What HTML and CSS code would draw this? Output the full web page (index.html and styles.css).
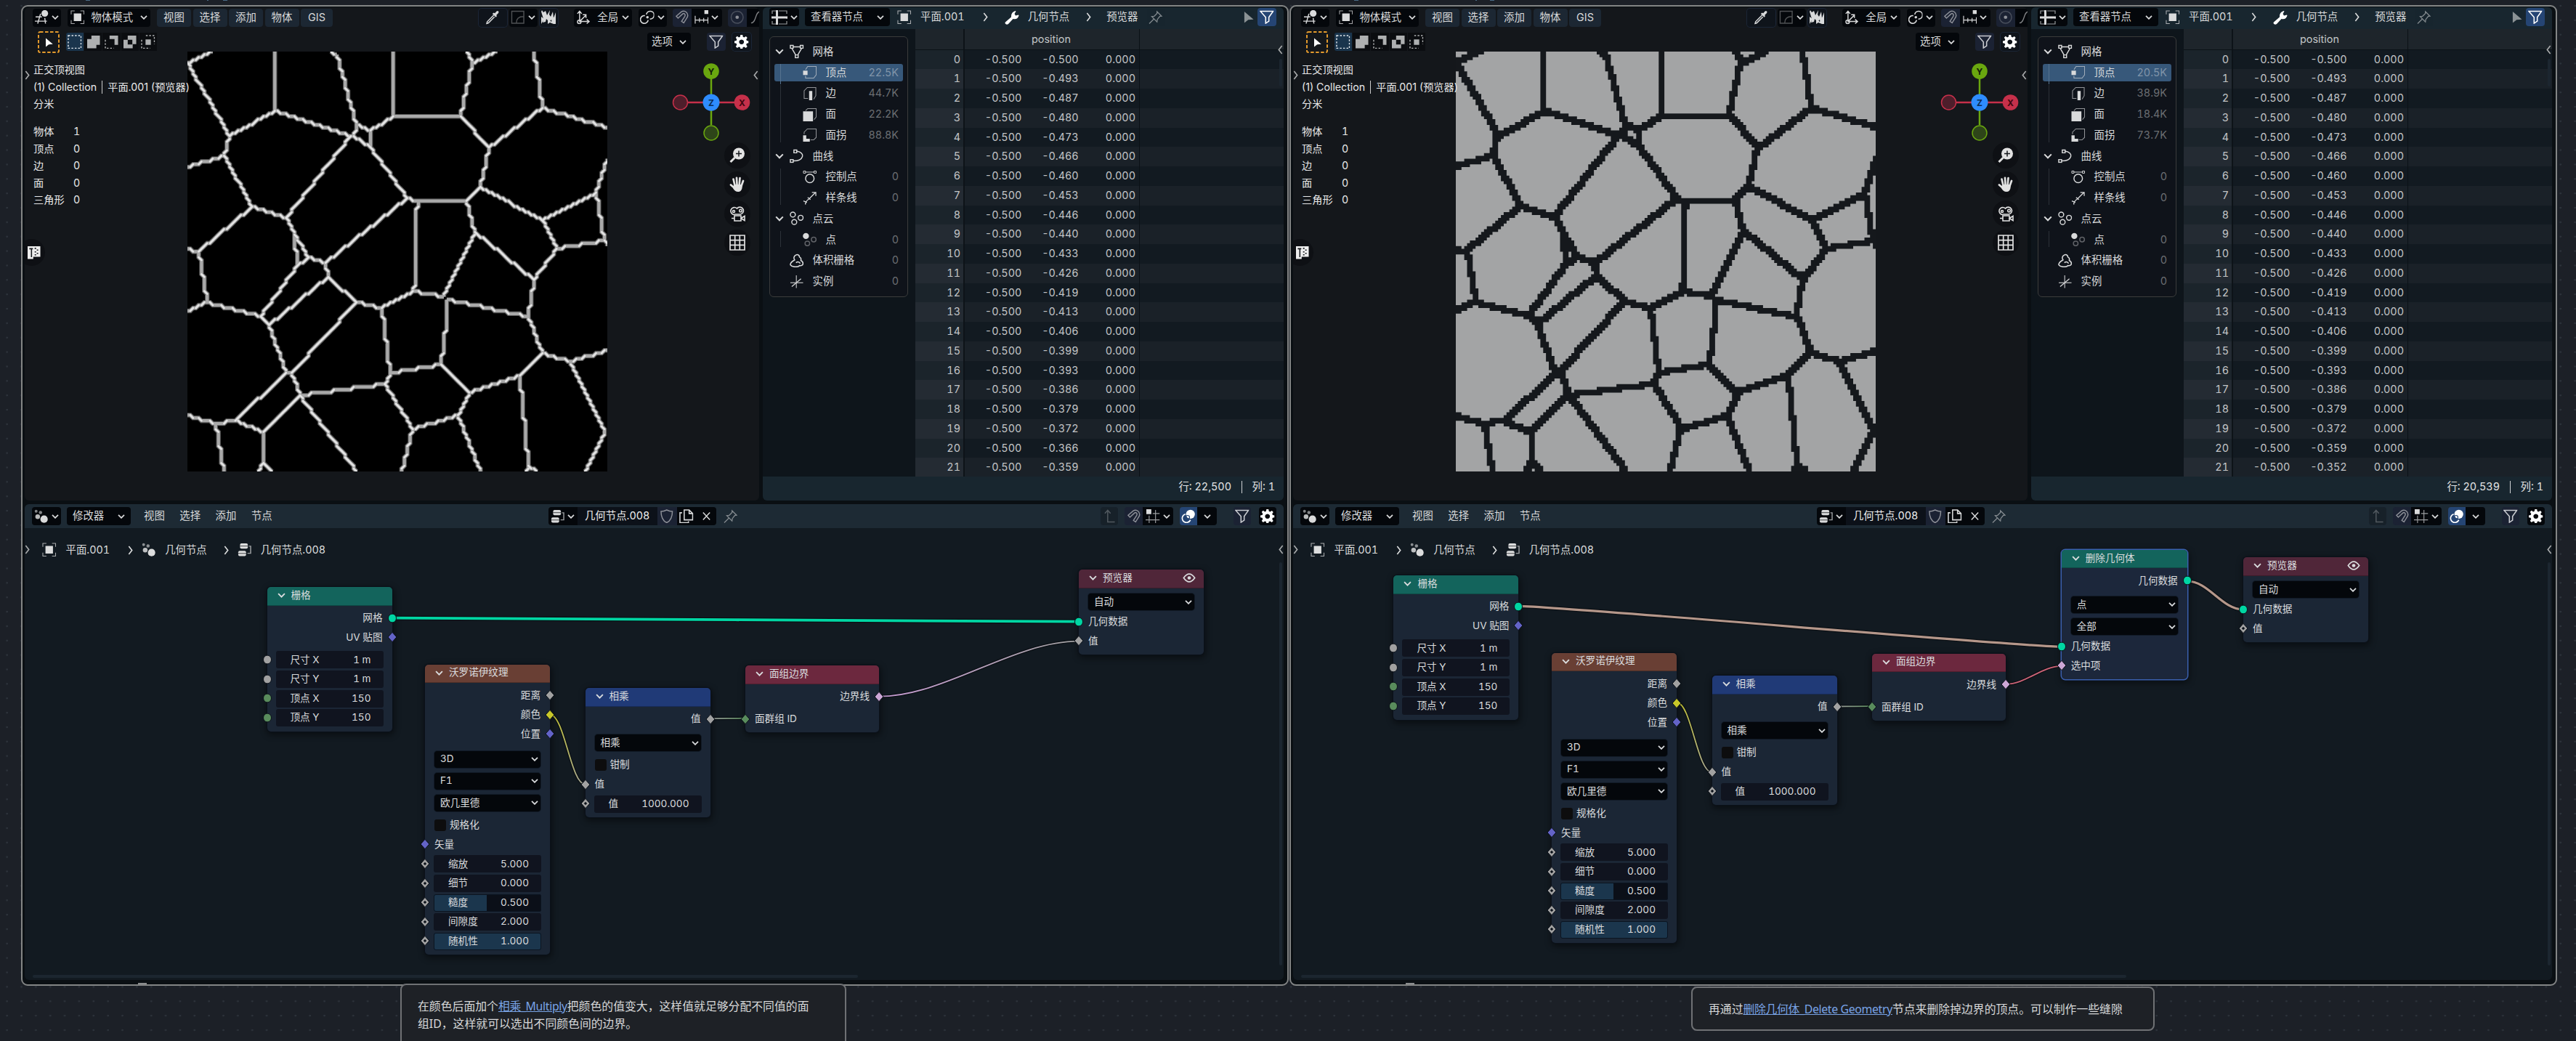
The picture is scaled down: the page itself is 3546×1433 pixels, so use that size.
FILE: index.html
```html
<!DOCTYPE html>
<html lang="zh-CN">
<head>
<meta charset="utf-8">
<title>几何节点.008</title>
<link rel="stylesheet" href="styles.css">
</head>
<body>
<svg class="defs" aria-hidden="true">
  <symbol id="down" viewBox="0 0 10 6"><path d="M1 .8 5 4.9 9 .8" stroke-width="1.7"/></symbol>
  <symbol id="right" viewBox="0 0 6 12"><path d="M1 1 5 6 1 11"/></symbol>
  <symbol id="left" viewBox="0 0 6 12"><path d="M5 1 1 6 5 11"/></symbol>
  <symbol id="view3d" viewBox="0 0 20 20"><path d="M8 5 4 19M1 9.5h9M0 15.5h17M14 11l1 8"/><circle cx="14" cy="4.5" r="4.7" class="s"/></symbol>
  <symbol id="object" viewBox="0 0 20 20"><path d="M1 6V1h5M14 1h5v5M19 14v5h-5M6 19H1v-5" stroke-width="1.1" opacity=".75"/><path class="s" d="M4.700 4.700h10.600v10.600H4.700z"/></symbol>
  <symbol id="dropper" viewBox="0 0 20 20"><path d="M12 7 2.800 16.200 2 19l2.500-1 8.500-8.500"/><path class="s" d="m10 5 2-1.500 1.500.8L16 1.500q1.500-1 2.500 0t0 2.500l-2.800 3 .6 1.500L15 10z"/></symbol>
  <symbol id="falloff" viewBox="0 0 20 20"><path d="M1.500 1.500h17v17h-17zM8 18q0-9 10-9" opacity=".35"/></symbol>
  <symbol id="noise" viewBox="0 0 22 20"><path class="s" d="M1 2 2 0l2 3 3-2 2 6 4-7-1 6 2 3 3-7 1 9 3-8v15h-5l-1-5-3 3-4-4-1 4-4 1 1-5z"/><path class="s" d="m1 9 4 3-4 7zM10 12l5 4 5-9 1 12h-3l-5-2-3 2z"/></symbol>
  <symbol id="axes" viewBox="0 0 20 20"><path d="M5 17V2M1.800 5 5 1.500 8 5M5 16h13M15 13l3.500 3-3.500 3M6 15l8-8M9.500 6.500H14V11"/><circle cx="4.500" cy="16.500" r="2.500"/></symbol>
  <symbol id="pivot" viewBox="0 0 20 20"><path d="M9 6a5.500 5.500 0 1 1 5 6.500M11.500 14A5.500 5.500 0 1 1 7 7.800" stroke-width="1.700"/><circle cx="10.500" cy="10" r="1.800" class="s"/></symbol>
  <symbol id="magnet" viewBox="0 0 20 20"><path d="M2 8.500 9 2.500c5-3.500 11 2 8.500 7.500L12.500 18l-3-2.200 4.500-7c1.500-3-1-5-3-3.500L4.500 11.200z"/></symbol>
  <symbol id="snapinc" viewBox="0 0 20 20"><path d="M1 8v11M19 10v9M1 14h18M7 11v6M13 11v6" stroke-width="1.200"/><path class="s" d="M14 0h6v5.500h-6z"/></symbol>
  <symbol id="prop" viewBox="0 0 20 20"><circle cx="10" cy="10" r="8.500" opacity=".4"/><circle cx="10" cy="10" r="2.400" class="s"/></symbol>
  <symbol id="curvef" viewBox="0 0 20 20"><path d="M4 18C12 18 9 2 17 2" stroke-width="1.300"/></symbol>
  <symbol id="pointer" viewBox="0 0 20 20"><path class="s" d="M4 2 17 13l-7.500.5L4 18z"/></symbol>
  <symbol id="m1" viewBox="0 0 20 20"><path d="M1 1h18v18H1z" stroke-dasharray="2.500 2.200"/></symbol>
  <symbol id="m2" viewBox="0 0 20 20"><path class="s" d="M7 1h12v13h-5v5H1V6h6z"/></symbol>
  <symbol id="m3" viewBox="0 0 20 20"><path class="s" d="M7 1h12v13h-5V6H7z"/><path d="M1 7v12h12" stroke-dasharray="2.500 2.200"/></symbol>
  <symbol id="m4" viewBox="0 0 20 20"><path class="s" fill-rule="evenodd" d="M7 1h12v12h-5v6H1V7h6zM7 7h6.500v6.500H7z"/></symbol>
  <symbol id="m5" viewBox="0 0 20 20"><path class="s" d="M6.500 6.500h7.500V14H6.500z"/><path d="M7 1h12v12M1 7v12h12" stroke-dasharray="2.500 2.200"/></symbol>
  <symbol id="funnel" viewBox="0 0 20 20"><path d="M1 1.500h18l-6 8.500v5.500L8.500 18.500V10z" stroke-width="1.600"/></symbol>
  <symbol id="gear" viewBox="0 0 20 20"><path class="s" fill-rule="evenodd" d="m8.500 0h3l.5 2.800 1.800.8 2.400-1.600 2 2-1.600 2.400.8 1.900 2.600.4v2.900l-2.700.5-.7 1.900 1.600 2.300-2.100 2.100-2.400-1.600-1.800.7-.5 2.700H8.500L8 17.500l-1.800-.7-2.300 1.600-2.100-2.100L3.400 14l-.8-1.900L0 11.500V8.600l2.700-.5.7-1.800-1.600-2.400L3.900 1.900l2.300 1.600L8 2.800zM10 6.600a3.400 3.400 0 1 0 .01 0z"/></symbol>
  <symbol id="zoom" viewBox="0 0 22 22"><circle cx="13" cy="8.500" r="8" class="s"/><path d="m7.500 14-6 6" stroke-width="3"/><path d="M13 4.500v8M9 8.500h8" stroke="#14171b"/></symbol>
  <symbol id="hand" viewBox="0 0 22 22"><path d="m7.500 12-2-8.500M10.500 11 10 1.800M13.700 11 14.500 2M16.500 13l2.500-7M6 15 2 11.500" stroke-width="2.700" stroke-linecap="round"/><path class="s" d="M6 11h12l-.5 5q-1 5-5.500 5T5 16z"/></symbol>
  <symbol id="camera" viewBox="0 0 22 22"><path d="M7 12.500a5 5 0 1 1 3.500-8.500 5 5 0 1 1 5 8H7M7 14h9v7H7zM16 17.500l5-3v6zM3 17.500h4" stroke-width="1.600"/><circle cx="6" cy="8" r="1.500"/><circle cx="15.500" cy="7" r="1.800"/></symbol>
  <symbol id="ortho" viewBox="0 0 22 22"><path d="M1 1h20v20H1zM7.700 1v20M14.300 1v20M1 7.700h20M1 14.300h20" stroke-width="1.700"/></symbol>
  <symbol id="tpanel" viewBox="0 0 20 20"><path class="s" d="M1 1h18v15H9v3H1z"/><path d="M3.500 4.500h5M6.500 4.500v12M11 4h2M14 6.500h2M11 9h2M14 11h2M11 13h2" stroke="#14171b" stroke-width="1.600"/></symbol>
  <symbol id="sheet" viewBox="0 0 22 20"><path d="M1 5V1h5M10 1h11v4M21 9v3M21 15v4H10M6 19H1v-4" stroke-width="1.200" opacity=".7"/><path d="M7.500 0v20M0 10h22" stroke-width="3"/></symbol>
  <symbol id="wrench" viewBox="0 0 20 20"><path class="s" d="M1.500 16 9 9.500Q8.500 3 14.500 1l1 .4-2 3.600 1.500 2.500 4-1 .5.800Q18 13.500 11.500 12L5 19Q3 20.500 1.300 19t.2-3z"/></symbol>
  <symbol id="pin" viewBox="0 0 20 20"><path d="m12 2 6.500 6.500-2.500.2-3.500 4.300-.5 3.500-7.500-7.500L8 8.500l4-4zM7.500 12.500 1 19" stroke-width="1.300"/></symbol>
  <symbol id="mesh" viewBox="0 0 20 20"><path d="M1 1.500h4v4H1zM15 1.500h4v4h-4zM8 15h4v4H8zM5 3.500h10M3 5.500 8.500 15M17 5.500 11.500 15"/></symbol>
  <symbol id="vert" viewBox="0 0 20 20"><path d="M4 6 7 1.500h12v12l-3.500 4.500H4v-3.500" stroke-width="1.100" opacity=".65"/><path class="s" d="M.5 7.500h6.300v6H.5z"/></symbol>
  <symbol id="edge" viewBox="0 0 20 20"><path d="M7.500 17H2V6l4.500-4.500H18.500V13l-3 5" stroke-width="1.100" opacity=".65"/><path class="s" d="M9 6.500h4.500v13H9z"/></symbol>
  <symbol id="face" viewBox="0 0 20 20"><path d="M4 4.500 7 1.500h12v12l-3 3.500" stroke-width="1.100" opacity=".65"/><path class="s" d="M.5 5.500h14v14H.5z"/></symbol>
  <symbol id="corner" viewBox="0 0 20 20"><path d="M2 9V6l4.500-4.500H19v12L15.500 17H11" stroke-width="1.100" opacity=".65"/><path class="s" d="M.5 10.500h4.500v5H10v4H.5z"/></symbol>
  <symbol id="curve" viewBox="0 0 20 20"><path d="M6 1.500h4v4H6zM1 15h4v4H1zM10 3c13 2 10 14-5 14"/></symbol>
  <symbol id="ctrl" viewBox="0 0 20 20"><circle cx="10" cy="12" r="6"/><path d="M4 3h12" stroke-width="1"/><path d="M1 1.500h3v3H1zM16 1.500h3v3h-3z" stroke-width="1"/></symbol>
  <symbol id="spline" viewBox="0 0 20 20"><path d="M4 19Q3 15 9 11L18 2M13 2h5.500v5M1 14l5 2M7 9l4 3" stroke-width="1.300"/></symbol>
  <symbol id="cloud" viewBox="0 0 20 20"><circle cx="4.500" cy="4.500" r="3.500"/><circle cx="15.500" cy="9" r="3.500"/><circle cx="6.500" cy="15" r="3.500"/></symbol>
  <symbol id="point" viewBox="0 0 20 20"><circle cx="4.500" cy="5" r="4.300" class="s"/><circle cx="15.500" cy="10" r="3.300" opacity=".4"/><circle cx="6.500" cy="15.500" r="3.300" opacity=".4"/></symbol>
  <symbol id="volume" viewBox="0 0 20 20"><path d="M7 9C3 3 13-2 14 5c4 2 1 4 2 5 4 2 4 8-2 7-3 3-11 2-13-1 0-4 3-5 6-7zM9 13q3-3 6 1" stroke-width="1.600"/></symbol>
  <symbol id="inst" viewBox="0 0 20 20"><path d="M9.500 1v18M1 11.500h18" opacity=".7"/><path d="m3 17 13-11" stroke-width="1.300"/></symbol>
  <symbol id="gnodes" viewBox="0 0 20 20"><circle cx="2.800" cy="2.800" r="2" class="s" opacity=".6"/><circle cx="9" cy="4.500" r="2.300" class="s" opacity=".6"/><circle cx="5" cy="10.500" r="3.300" class="s" opacity=".85"/><circle cx="14" cy="14" r="5.200" class="s"/></symbol>
  <symbol id="tree" viewBox="0 0 20 20"><rect x="3.500" y="1" width="11" height="7.500" rx="2" class="s"/><rect x="1" y="11.500" width="11" height="7.500" rx="2" class="s"/><path d="M3.500 4.800h11M1 15.200h11" stroke="#14171b" stroke-width=".8"/><path d="M16 5h2.500v10H14" opacity=".7"/></symbol>
  <symbol id="shield" viewBox="0 0 20 20"><path d="M10 1q4 2 8 2c0 8-2 13-8 16C4 16 2 11 2 3q4 0 8-2z"/></symbol>
  <symbol id="copy" viewBox="0 0 20 20"><path d="M7 1h7l5 5v9H7zM14 1v5h5M4 5H1v14h12v-2" stroke-width="1.600"/></symbol>
  <symbol id="cross" viewBox="0 0 20 20"><path d="m4.500 4 11 12M15.500 4l-11 12" stroke-width="1.700"/></symbol>
  <symbol id="parent" viewBox="0 0 20 20"><path d="M18 18H8V2M4 6l4-4.500L12 6"/></symbol>
  <symbol id="nsnap" viewBox="0 0 20 20"><path d="M5 9v11M14 1v19M0 15h20M10 6h10" stroke-width="1.200" opacity=".7"/><path class="s" d="M1 0h7v7H1z"/></symbol>
  <symbol id="overlay" viewBox="0 0 20 20"><circle cx="13" cy="7" r="6.300" class="s"/><path d="M5.800 7A6 6 0 1 0 13 15" stroke-width="1.700"/><circle cx="9" cy="11.500" r="2.800" stroke="#254574" stroke-width="1.200"/></symbol>
  <symbol id="eye" viewBox="0 0 20 14"><path d="M1.500 7q8.500-12 17 0-8.500 12-17 0z" stroke-width="1.900"/><circle cx="10" cy="7" r="2.600" class="s"/></symbol>
</svg>

<main class="desk">
  <section class="window" data-window="left"></section>
  <section class="window" data-window="right"></section>
</main>

<div class="scraps"><i></i><i></i><i></i><i></i><i></i><i></i><b></b><b></b></div>
<article class="note note-a">在颜色后面加个<a>相乘_Multiply</a>把颜色的值变大，这样值就足够分配不同值的面<br>组ID，这样就可以选出不同颜色间的边界。</article>
<article class="note note-b">再通过<a>删除几何体_Delete Geometry</a>节点来删除掉边界的顶点。可以制作一些缝隙</article>
<script src="app.js"></script>
</body>
</html>
```
FILE: styles.css
```css
* { box-sizing: border-box; }
body {
  margin: 0; width: 3546px; height: 1433px; overflow: hidden; position: relative;
  background: #1c2027 radial-gradient(circle at 9.6px 8px, #2d333b 0, #2d333b 1px, transparent 1.600px) 0 0 / 19.860px 19.860px;
  font: 14.400px/1 Inter, "Noto Sans CJK SC", sans-serif; color: #d9dadb;
  font-feature-settings: "tnum"; white-space: nowrap;
}
.defs { position: absolute; width: 0; height: 0; }
svg { display: block; flex: none; fill: none; stroke: currentColor; stroke-width: 1.500; }
.s { fill: currentColor; stroke: none; }
.ic { width: 19.500px; height: 19.500px; }
.dn { width: 10px; height: 6px; }
.cv { width: 7px; height: 13px; }

.desk { display: flex; gap: 1px; padding: 7px 0 0 29px; }
.window {
  width: 1745px; height: 1350px; flex: none; border: 2px solid #838585; border-radius: 9px;
  background: #0a0f13; padding: 1px 5px 6px 3px; display: flex; flex-direction: column; gap: 5px;
}
.top { display: flex; gap: 5px; height: 679px; }

.bar { display: flex; align-items: center; }
.btn {
  display: flex; align-items: center; justify-content: center; gap: 4px; height: 25px;
  border-radius: 4px; background: #04070b; flex: none; overflow: hidden;
}
.btn.menu { background: #1c2733; }
.btn.dim { background: #17212a; }
.btn.navy { background: #1b2233; color: #8d9098; }
.btn.rim { background: #0f141b; box-shadow: 0 0 0 1px #1b2536; }
.btn.blue { background: #254574; color: #fff; }
.btn.spread { justify-content: space-between; padding: 0 8px; }
.flat-r { border-top-right-radius: 0; border-bottom-right-radius: 0; }
.flat-l { border-top-left-radius: 0; border-bottom-left-radius: 0; }
.flat { border-radius: 0; }

.viewport { width: 1011px; position: relative; background: #14171b; border-radius: 6px; overflow: hidden; }
.viewport .bar.one { padding: 1px 0 0 11px; height: 27px; }
.viewport .bar.two { padding: 0 10px 0 18px; height: 40px; margin-top: 5px; align-items: flex-start; padding-top: 3px; }
.cursor-tool { width: 30px; height: 30px; display: grid; place-items: center; margin-top: -2px; }
.cursor-tool .ring { grid-area: 1/1; width: 30px; height: 30px; color: #e39a2c; }
.cursor-tool .ic { grid-area: 1/1; width: 15px; height: 17px; color: #fff; }
.modes { display: flex; margin-left: 9px; height: 25px; gap: 1px; }
.modes span { width: 24.200px; background: #0b0d10; display: grid; place-items: center; color: #aeb0b1; }
.modes span:first-child { background: #1a354d; color: #e4e9ee; border-radius: 3px 0 0 3px; }
.plane { position: absolute; left: 224px; top: 61px; width: 578px; height: 578px; }
.info { position: absolute; left: 12px; top: 74px; line-height: 23.700px; font-size: 14.200px; color: #e9e9e9; font-feature-settings: normal; }
.info .sep { display: inline-block; width: 1px; height: 18px; background: #ccc; vertical-align: -4px; margin: 0 7px; }
.stats { position: absolute; left: 12px; top: 159px; display: grid; grid-template-columns: 55px auto; line-height: 23.500px; font-size: 14.200px; color: #e9e9e9; }
.edge-tab { position: absolute; color: #a9abac; }
.tpanel { position: absolute; left: -9px; top: 319px; width: 37px; height: 37px; border-radius: 50%; background: #0e1014; display: grid; place-items: center; padding-left: 7px; }
.tpanel .ic { color: #eee; }
.gizmo { position: absolute; left: 889px; top: 74px; width: 112px; height: 112px; font: bold 12px Inter, sans-serif; }
.tools { position: absolute; left: 963px; top: 186px; display: grid; gap: 4px; color: #e2e2e2; }
.tools span { width: 36px; height: 36px; border-radius: 50%; background: #0e1014; display: grid; place-items: center; }
.tools svg { width: 22px; height: 22px; }

.sheet { width: 717px; background: #0e151b; border-radius: 6px; overflow: hidden; position: relative; display: flex; flex-direction: column; }
.sheet .bar { height: 30px; background: #18262f; padding: 0 10px 3px 9px; }
.sheet-body { display: flex; height: 616px; overflow: hidden; }
.tree {
  margin: 10px 10px 0 9px; width: 191px; height: 359px; border: 1.500px solid #3b3c3b; border-radius: 6px;
  background: #0f131a; padding: 8px 6px; flex: none;
}
.tree div { display: flex; align-items: center; height: 24px; margin-bottom: 4.750px; padding-right: 6px; border-radius: 3px; }
.tree .dn { width: 12px; height: 8px; margin-right: 8px; margin-left: 1px; }
.tree .ic { margin-right: 12px; }
.tree .pad .ic { margin-left: 21px; }
.tree .kid { position: relative; }
.tree .kid::before { content: ""; position: absolute; left: 8px; top: 0; height: 28.700px; width: 1px; background: #2c3138; }
.tree .last::before { height: 22px; }
.tree .kid .ic { margin-left: 39px; }
.tree .on { background: #37587a; }
.tree .on::before { background: #56738f; }
.tree b { margin-left: auto; font-weight: 400; color: #6b6e72; }
.tree .on b { color: #8094a9; }
.table { flex: 1; color: #c3c5c7; }
.table div { display: flex; height: 26.750px; align-items: center; background: #121a21; }
.table div > * { height: 100%; display: flex; align-items: center; justify-content: flex-end; }
.table i { width: 68px; font-style: normal; background: #1b242b; border-right: 2px solid #0d1318; padding-right: 4px; }
.table .trip { width: 241px; border-right: 1.500px solid #0b1116; padding-right: 5px; }
.table .trip span { width: 78.500px; text-align: right; }
.table div:nth-child(odd) { background: #1a2128; }
.table div:nth-child(odd) i { background: #242b33; }
.table .head { height: 28.500px; background: #1e252b !important; border-bottom: 1.500px solid #0b1116; }
.table .head i { background: #1e252b !important; }
.table .head .trip { justify-content: center; padding-right: 2px; }
.sheet footer { height: 33px; background: #18262f; display: flex; justify-content: flex-end; align-items: center; padding: 0 12px 4px 0; color: #e2e3e4; }
.sheet footer u { width: 1.500px; height: 17px; background: #cfd2d4; margin: 0 13.500px; }
.vscroll { position: absolute; border-radius: 3px; background: #1c2630; }

.nodes { height: 655px; background: #121a21; border-radius: 6px; position: relative; overflow: hidden; }
.nodes .bar { height: 33px; background: #1d2a34; padding: 0 10px; }
.nodes .crumbs { height: 60px; display: flex; align-items: center; padding-left: 24px; color: #dcdddd; }
.wires { position: absolute; inset: 0; width: 1733px; height: 655px; }
.node {
  position: absolute; border-radius: 5px; background: #1b2635; color: #dadcde; font-size: 13.600px;
  box-shadow: 0 0 0 1.200px #0b1119, 1px 3px 9px 2px rgba(0,0,0,.45);
}
.node > header { height: 25.500px; border-radius: 5px 5px 0 0; display: flex; align-items: center; padding: 0 14px 1px; border-bottom: 1.500px solid rgba(0,0,0,.25); }
.node > header .dn { width: 11px; height: 7px; margin-right: 8px; }
.node > header .eye { width: 18px; height: 13px; margin-left: auto; margin-right: -3px; }
.node .body { padding: 4px 13px 5px; }
.row { height: 26.600px; display: flex; align-items: center; position: relative; }
.row.out { justify-content: flex-end; }
.row.gap { margin-top: 4.500px; }
.row.sel.wide { margin-top: 6.200px; }
.row.tight { margin-top: -1.100px; }
.row.sel { height: 30.200px; }
.row.sel > span { width: 100%; height: 23px; border-radius: 4px; background: #04070b; display: flex; align-items: center; justify-content: space-between; padding: 0 3px 0 8px; box-shadow: 0 0 0 1px #111a26; }
.row.chk { height: 30px; }
.row.chk > span { width: 16px; height: 16px; border-radius: 3px; background: #0d0d0e; margin-right: 5px; }
.row.fld > span { height: 24px; margin: 0 -1px; border-radius: 3px; background: #10141f; display: flex; align-items: center; justify-content: space-between; padding: 0 17px 0 20px; flex: 1; }
.row.fld em { font-style: normal; }
.row.fld .slide { background: linear-gradient(90deg, #1b364d var(--v), #0b0f18 var(--v)); box-shadow: inset 0 0 0 1px #0b1420; }
.sock { position: absolute; width: 12px; height: 14px; stroke: #0b1119; stroke-width: 1; top: 6px; }
.in .sock, .fld .sock { left: -19px; }
.out .sock { right: -19px; }
.node.active { box-shadow: 0 0 0 1.500px #3a5fae, 1px 3px 9px 2px rgba(0,0,0,.45); background: #1c273b; }

.note { position: absolute; border: 2.500px solid #6f7174; border-radius: 8px; background: #1e2126; color: #d8d9da; font: 15.850px/24px "Noto Sans", "Noto Sans CJK SC", sans-serif; font-feature-settings: normal; padding: 17px 22px; }
.note a { color: #79a4e6; text-decoration: underline; letter-spacing: -.35px; }
.note-a { left: 551px; top: 1354px; width: 614px; height: 110px; }
.note-b { left: 2328px; top: 1358px; width: 638px; height: 61px; }
.scraps i { position: absolute; top: 0; height: 1px; width: 6px; background: #4a6a85; }
.scraps b { position: absolute; top: 1353px; height: 2px; width: 12px; background: #8b8d8e; left: 190px; }
.scraps b:last-child { left: 1935px; }
.scraps i:nth-child(1) { left: 118px; } .scraps i:nth-child(2) { left: 285px; width: 2px; } .scraps i:nth-child(3) { left: 307px; }
.scraps i:nth-child(4) { left: 1864px; } .scraps i:nth-child(5) { left: 2031px; width: 2px; } .scraps i:nth-child(6) { left: 2051px; }
```
FILE: app.js
```js
const ic = (id, cls = 'ic', style = '') => `<svg class="${cls}"${style ? ` style="${style}"` : ''}><use href="#${id}"/></svg>`;
const dn = ic('down', 'dn');
const btn = (w, ml, cls, inner) => `<div class="btn ${cls}" style="width:${w}px;margin-left:${ml}px">${inner}</div>`;

// Cell borders of the Voronoi pattern, in the units of a 1486 x 1510 sheet.
const borders = `140,30 50,75 200,330|355,30 355,240|200,330 358,240 620,333|555,30 575,38 645,295|645,295 695,310|645,295 635,330 620,333
695,310 695,372|635,330 695,372 825,552|775,30 775,262 695,310|775,262 1013,262|1035,30 1052,72 1140,30|1052,72 1013,262
1013,262 1113,378 1300,230 1532,302|1272,30 1300,230|1113,378 1088,517 1033,567 868,567 825,552|620,333 400,630
200,330 175,403 46,447|175,403 280,585 400,630|280,585 87,750 46,738|87,750 118,932 46,965|118,932 303,983 333,1012
400,630 428,685 475,768 530,795|428,685 438,800|475,768 438,800 303,983|530,795 825,552|530,795 545,838 333,1012
545,838 643,928 415,1190|333,1012 400,1190 415,1190 445,1265|643,928 733,950 845,888 953,912|868,570 855,620 853,860 845,888
1033,567 1060,675 953,912|1088,517 1302,637 1490,540 1530,420|1490,540 1522,710 1530,725|1302,637 1355,737 1525,712
1060,675 1270,850 1355,737|1270,850 1250,983 960,925|1250,983 1305,1115 1407,1148 1530,1100|1407,1148 1526,1400 1450,1538
1305,1115 1225,1197 1047,1256 940,1157|1225,1197 1255,1520 1240,1538|1255,1520 1285,1538|960,920 960,1000 940,1157 760,1187 743,1223
733,950 760,1187|743,1223 445,1268|743,1223 847,1387 1000,1338 1047,1256|847,1387 805,1538|1000,1338 1087,1538
445,1268 645,1538|445,1268 317,1400 212,1358 400,1190|212,1358 147,1365 46,1338|147,1365 178,1538|317,1400 315,1512 295,1538|315,1512 350,1538`;

function lattice() {
  const N = 149, lines = [];
  for (const poly of borders.split(/[|\n]/)) {
    const p = poly.trim().split(' ').map(s => { const [x, y] = s.split(',').map(Number); return [Math.round((x - 46) / 1486 * N), Math.round((y - 30) / 1510 * N)]; });
    for (let k = 1; k < p.length; k++) {
      const [x0, y0] = p[k - 1], [x1, y1] = p[k], n = Math.max(Math.abs(x1 - x0), Math.abs(y1 - y0)) || 1, pts = [];
      for (let i = 0; i <= n; i++) pts.push([Math.round(x0 + (x1 - x0) * i / n), Math.round(y0 + (y1 - y0) * i / n)]);
      lines.push(pts);
    }
  }
  return lines;
}

function plane(kind) {
  const c = 578 / 149, lines = lattice(), q = v => (v * c).toFixed(1);
  if (kind === 'left') {
    let all = '', diag = '';
    for (const l of lines) {
      all += 'M' + l.map(p => q(p[0]) + ' ' + q(p[1])).join('L');
      for (let i = 1; i < l.length; i++) if (l[i][0] !== l[i - 1][0] && l[i][1] !== l[i - 1][1]) diag += `M${q(l[i - 1][0])} ${q(l[i - 1][1])}L${q(l[i][0])} ${q(l[i][1])}`;
    }
    return `<svg class="plane" viewBox="0 0 578 578"><path fill="#000" stroke="none" d="M0 0h578v578H0z"/><path d="${all}" stroke="#505050" stroke-width="6.500"/><path d="${all}" stroke="#a9a9a9" stroke-width="4.300"/><path d="${diag}" stroke="#e4e4e4" stroke-width="2.600" stroke-linecap="round"/></svg>`;
  }
  // Every lattice vertex on a border takes its four faces with it; a diagonal
  // step walks round a face, so the vertex at the turn goes too.
  const gone = new Set();
  for (const l of lines) l.forEach(([x, y], i) => {
    gone.add(x + ',' + y);
    if (i && l[i - 1][0] !== x && l[i - 1][1] !== y) gone.add(x + ',' + l[i - 1][1]);
  });
  let d = '';
  for (const key of gone) {
    const [x, y] = key.split(',');
    d += `M${q(x - 1)} ${q(y - 1)}h7.800v7.800h-7.800z`;
  }
  return `<svg class="plane" viewBox="0 0 578 578"><path fill="#a3a4a5" stroke="none" d="M0 0h578v578H0z"/><path fill="#15181c" stroke="none" d="${d}"/></svg>`;
}

const gizmo = `<svg class="gizmo" viewBox="0 0 112 112"><path d="M56 24v32M56 56v32" stroke="#6aa70f" stroke-width="2.500"/><path d="M24 57h64" stroke="#c6304a" stroke-width="2.500"/>
<circle cx="56" cy="14" r="10.800" fill="#6aa70f" stroke="none"/><circle cx="56" cy="99" r="10" fill="#2e4519" stroke="#6aa70f"/><circle cx="13.500" cy="57" r="10" fill="#4e1e2b" stroke="#c6304a"/>
<circle cx="98.500" cy="57" r="10.800" fill="#c6304a" stroke="none"/><circle cx="56" cy="57" r="11.500" fill="#2e8cff" stroke="none"/>
<g fill="#132008" stroke="none" text-anchor="middle"><text x="56" y="18.500">Y</text><text x="98.500" y="61.500" fill="#42060f">X</text><text x="56" y="61.500" fill="#0b2c55">Z</text></g></svg>`;

const viewport = kind => `<div class="viewport">
<div class="bar one">${btn(39, 0, '', ic('view3d') + dn)}${btn(114, 9, '', ic('object') + '<span style="margin:0 6px 0 5px">物体模式</span>' + dn)}
${btn(47, 9, 'menu', '视图')}${btn(47, 2.5, 'menu', '选择')}${btn(47, 2.5, 'menu', '添加')}${btn(47, 2.5, 'menu', '物体')}${btn(44, 2.5, 'menu', 'GIS')}
${btn(39, 200.5, 'rim', ic('dropper'))}${btn(39, 3, '', ic('falloff') + dn)}${btn(25, 3, 'rim', ic('noise', 'ic', 'width:22px;height:20px'))}
${btn(80, 22, '', ic('axes') + '<span style="margin:0 1px 0 6px">全局</span>' + dn)}${btn(39, 9, '', ic('pivot') + dn)}${btn(26, 8, 'navy flat-r', ic('magnet'))}${btn(42, 0, 'flat-l', ic('snapinc') + dn)}
${btn(26, 8, 'navy flat-r', ic('prop'))}${btn(24, 0, 'flat-l', ic('curvef', 'ic', 'opacity:.6'))}</div>
<div class="bar two"><div class="cursor-tool"><svg class="ring" viewBox="0 0 30 30"><rect x="1" y="1" width="28" height="28" rx="2" stroke-width="2" stroke-dasharray="4.500 2.500"/></svg>${ic('pointer')}</div>
<div class="modes">${[1, 2, 3, 4, 5].map(n => `<span>${ic('m' + n)}</span>`).join('')}</div>
${btn(60, 675, '', '<span style="margin-right:5px">选项</span>' + dn)}${btn(26, 22, 'navy', ic('funnel', 'ic', 'color:#c9cbd0'))}${btn(26, 9, 'rim', ic('gear', 'ic', 'color:#fff'))}</div>
${plane(kind)}
<div class="info">正交顶视图<br>(1) Collection<span class="sep"></span>平面.001 (预览器)<br>分米</div>
<div class="stats"><span>物体</span><span>1</span><span>顶点</span><span>0</span><span>边</span><span>0</span><span>面</span><span>0</span><span>三角形</span><span>0</span></div>
${ic('right', 'cv edge-tab', 'left:0;top:87px')}${ic('left', 'cv edge-tab', 'left:1003px;top:87px')}
<div class="tpanel">${ic('tpanel')}</div>${gizmo}
<div class="tools"><span>${ic('zoom')}</span><span>${ic('hand')}</span><span>${ic('camera')}</span><span>${ic('ortho')}</span></div></div>`;

const ys = ['500', '493', '487', '480', '473', '466', '460', '453', '446', '440', '433', '426', '419', '413', '406', '399', '393', '386', '379', '372'];
const conf = {
  left: { n: ['22.5K', '44.7K', '22.2K', '88.8K'], ys: [...ys, '366', '359'], rows: '22,500' },
  right: { n: ['20.5K', '38.9K', '18.4K', '73.7K'], ys: [...ys, '359', '352'], rows: '20,539' }
};

const sheet = c => {
  const top = (i, t) => `<div>${dn}${ic(i)}${t}</div>`;
  const kid = (i, t, n, x = '') => `<div class="kid ${x}">${ic(i)}${t}<b>${n}</b></div>`;
  const row = (y, i) => `<div><i>${i}</i><section class="trip"><span>-0.500</span><span>-0.${y}</span><span>0.000</span></section></div>`;
  return `<div class="sheet"><div class="bar">${btn(41, 0, '', ic('sheet', 'ic', 'width:22px;height:20px') + dn)}${btn(117, 8, 'spread', '查看器节点' + dn)}
${ic('object', 'ic', 'margin:0 12.500px 0 10px')}平面.001${ic('right', 'cv', 'margin:0 23px 0 25px')}${ic('wrench', 'ic', 'width:20px;height:20px;margin-right:12px;color:#fff')}几何节点${ic('right', 'cv', 'margin:0 21px 0 23px')}预览器${ic('pin', 'ic', 'margin-left:15px;opacity:.55')}
${ic('pointer', 'ic', 'margin-left:auto;margin-right:3px;opacity:.6')}${btn(26, 0, 'blue', ic('funnel'))}</div>
<div class="sheet-body"><div class="tree">${top('mesh', '网格')}${kid('vert', '顶点', c.n[0], 'on')}${kid('edge', '边', c.n[1])}${kid('face', '面', c.n[2])}${kid('corner', '面拐', c.n[3], 'last')}
${top('curve', '曲线')}${kid('ctrl', '控制点', 0)}${kid('spline', '样条线', 0, 'last')}${top('cloud', '点云')}${kid('point', '点', 0, 'last')}
<div class="pad">${ic('volume')}体积栅格<b>0</b></div><div class="pad">${ic('inst')}实例<b>0</b></div></div>
<div class="table"><div class="head"><i></i><section class="trip">position</section></div>${c.ys.map(row).join('')}</div></div>
<footer>行: ${c.rows}<u></u>列: 1</footer>
${ic('left', 'cv edge-tab', 'left:709px;top:52px')}<div class="vscroll" style="left:711px;top:71px;width:4px;height:38px"></div></div>`;
};

const col = { g: '#00d6a3', v: '#6363c7', f: '#a1a1a1', i: '#598c5c', y: '#c7c729', b: '#cca6d6' };
const sock = (k, c) => `<svg class="sock" viewBox="0 0 12 14">${k === 'o' ? `<ellipse cx="6" cy="7" rx="5.500" ry="5.900" fill="${col[c]}"/>` : `<path d="M6 .3 11.900 7 6 13.700.1 7z" fill="${col[c]}"/>${k === 'h' ? '<circle cx="6" cy="7" r="1.300" fill="#0b1119"/>' : ''}`}</svg>`;
const out = (t, s, x = '') => `<div class="row out ${x}">${t}${sock(...s)}</div>`;
const inp = (t, s, x = '') => `<div class="row in ${x}">${t}${sock(...s)}</div>`;
const sel = (t, x = '') => `<div class="row sel ${x}"><span>${t}${dn}</span></div>`;
const chk = t => `<div class="row chk"><span></span>${t}</div>`;
const fld = (t, v, s, x = '', p) => `<div class="row fld ${x}">${sock(...s)}<span${p ? ` class="slide" style="--v:${p}%"` : ''}><em>${t}</em><em>${v}</em></span></div>`;
const node = (x, y, w, color, title, body, cls = '', extra = '') => `<article class="node ${cls}" style="left:${x}px;top:${y}px;width:${w}px"><header style="background:${color}">${dn}${title}${extra}</header><div class="body">${body}</div></article>`;

const grid = (x, y) => node(x, y, 172, '#13645c', '栅格', out('网格', 'og') + out('UV 贴图', 'dv') + fld('尺寸 X', '1 m', 'of', 'gap') + fld('尺寸 Y', '1 m', 'of') + fld('顶点 X', '150', 'oi') + fld('顶点 Y', '150', 'oi'));
const voronoi = (x, y) => node(x, y, 172, '#693f34', '沃罗诺伊纹理', out('距离', 'df') + out('颜色', 'dy') + out('位置', 'dv') + sel('3D', 'wide') + sel('F1') + sel('欧几里德') + chk('规格化') + inp('矢量', 'dv', 'tight') +
  fld('缩放', '5.000', 'hf') + fld('细节', '0.000', 'hf') + fld('糙度', '0.500', 'hf', '', 49) + fld('间隙度', '2.000', 'hf') + fld('随机性', '1.000', 'hf', '', 100));
const multiply = (x, y) => node(x, y, 172, '#203a77', '相乘', out('值', 'df') + sel('相乘', 'gap') + chk('钳制') + inp('值', 'df', 'tight') + fld('值', '1000.000', 'hf'));
const bounds = (x, y) => node(x, y, 184, '#6c283e', '面组边界', out('边界线', 'db') + inp('面群组 ID', 'di', 'gap'));
const viewer = (x, y, s) => node(x, y, 172, '#502639', '预览器', sel('自动') + inp('几何数据', 'og', 'tight') + inp('值', s), '', ic('eye', 'eye'));
const remove = (x, y) => node(x, y, 173, '#13645c', '删除几何体', out('几何数据', 'og') + sel('点', 'gap') + sel('全部') + inp('几何数据', 'og', 'tight') + inp('选中项', 'db'), 'active');

const wire = (id, x0, y0, x1, y1, h, a, b, w) => `<linearGradient id="${id}" gradientUnits="userSpaceOnUse" x1="${x0}" y1="0" x2="${x1}" y2="0"><stop stop-color="${a}"/><stop offset="1" stop-color="${b}"/></linearGradient>
<path d="M${x0} ${y0}C${x0 + h} ${y0} ${x1 - h} ${y1} ${x1} ${y1}" stroke="#0a0f14" stroke-width="${w + 2.5}"/><path d="M${x0} ${y0}C${x0 + h} ${y0} ${x1 - h} ${y1} ${x1} ${y1}" stroke="url(#${id})" stroke-width="${w}"/>`;
const graph = {
  left: `<svg class="wires">${wire('a1', 505.5, 156.7, 1451, 161.7, 300, '#00d6a3', '#00d6a3', 3.8)}${wire('a2', 723, 289.7, 771.5, 385.5, 20, '#c7c729', '#a1a1a1', 1.8)}
${wire('a3', 943.5, 295.2, 992, 294.7, 10, '#a1a1a1', '#598c5c', 1.8)}${wire('a4', 1176, 264.7, 1451, 188.7, 90, '#c59ad2', '#a1a1a1', 1.8)}</svg>` +
    grid(333.5, 114) + voronoi(551, 220.5) + multiply(771.5, 253) + bounds(992, 222) + viewer(1451, 90, 'df'),
  right: `<svg class="wires">${wire('b1', 310.4, 140.3, 1058, 196.3, 60, '#b5978a', '#b5978a', 3.2)}${wire('b2', 528, 273, 576.5, 369, 20, '#c7c729', '#a1a1a1', 1.8)}
${wire('b3', 748.5, 278.5, 797, 278.2, 10, '#a1a1a1', '#598c5c', 1.8)}${wire('b4', 981, 247.8, 1058, 222.9, 28, '#cc6377', '#cc6377', 1.8)}${wire('b5', 1230.7, 106, 1308, 145, 30, '#b5978a', '#b5978a', 3.2)}</svg>` +
    grid(138.4, 98) + voronoi(356, 204.5) + multiply(576.5, 236) + bounds(797, 205.5) + remove(1057.7, 62.7) + viewer(1308, 73, 'hf')
};

const nodes = kind => `<div class="nodes"><div class="bar">${btn(40, 0, '', ic('gnodes') + dn)}${btn(88, 8, 'spread', '修改器' + dn)}
<span style="margin-left:18px">视图</span><span style="margin-left:20.500px">选择</span><span style="margin-left:20.500px">添加</span><span style="margin-left:20.500px">节点</span>
${btn(40, 380, 'flat-r', ic('tree') + dn)}<div class="btn flat" style="width:110px;background:#0c1119;color:#eee">几何节点.008</div>${btn(27, 0, 'navy flat', ic('shield', 'ic'))}${btn(27, 0, 'flat', ic('copy'))}${btn(27, 0, 'flat-l', ic('cross', 'ic', 'width:17px;height:17px'))}${ic('pin', 'ic', 'margin-left:10px;opacity:.55')}
<span style="flex:1"></span>${btn(24, 0, 'dim', ic('parent', 'ic', 'opacity:.3'))}${btn(25, 9, 'navy flat-r', ic('magnet'))}${btn(42, 0, 'flat-l', ic('nsnap') + dn)}
${btn(24, 9, 'blue flat-r', ic('overlay'))}${btn(27, 0, 'flat-l', dn)}${btn(24, 23, 'navy', ic('funnel', 'ic', 'color:#c9cbd0'))}${btn(24, 11, '', ic('gear', 'ic', 'color:#fff'))}</div>
<div class="crumbs">${ic('object')}<span style="margin-left:13px">平面.001</span>${ic('right', 'cv', 'margin:0 12px 0 25px')}${ic('gnodes')}<span style="margin-left:12.500px">几何节点</span>${ic('right', 'cv', 'margin:0 12px 0 23px')}${ic('tree')}<span style="margin-left:12.500px">几何节点.008</span></div>
${graph[kind]}
${ic('right', 'cv edge-tab', 'left:0;top:56px')}${ic('left', 'cv edge-tab', 'left:1726px;top:56px')}
<div class="vscroll" style="left:1727px;top:80px;width:4px;height:555px"></div><div class="vscroll" style="left:11px;top:648px;width:1136px;height:4px"></div></div>`;

for (const w of document.querySelectorAll('.window')) {
  const kind = w.dataset.window;
  w.innerHTML = `<div class="top">${viewport(kind)}${sheet(conf[kind])}</div>${nodes(kind)}`;
}
```
